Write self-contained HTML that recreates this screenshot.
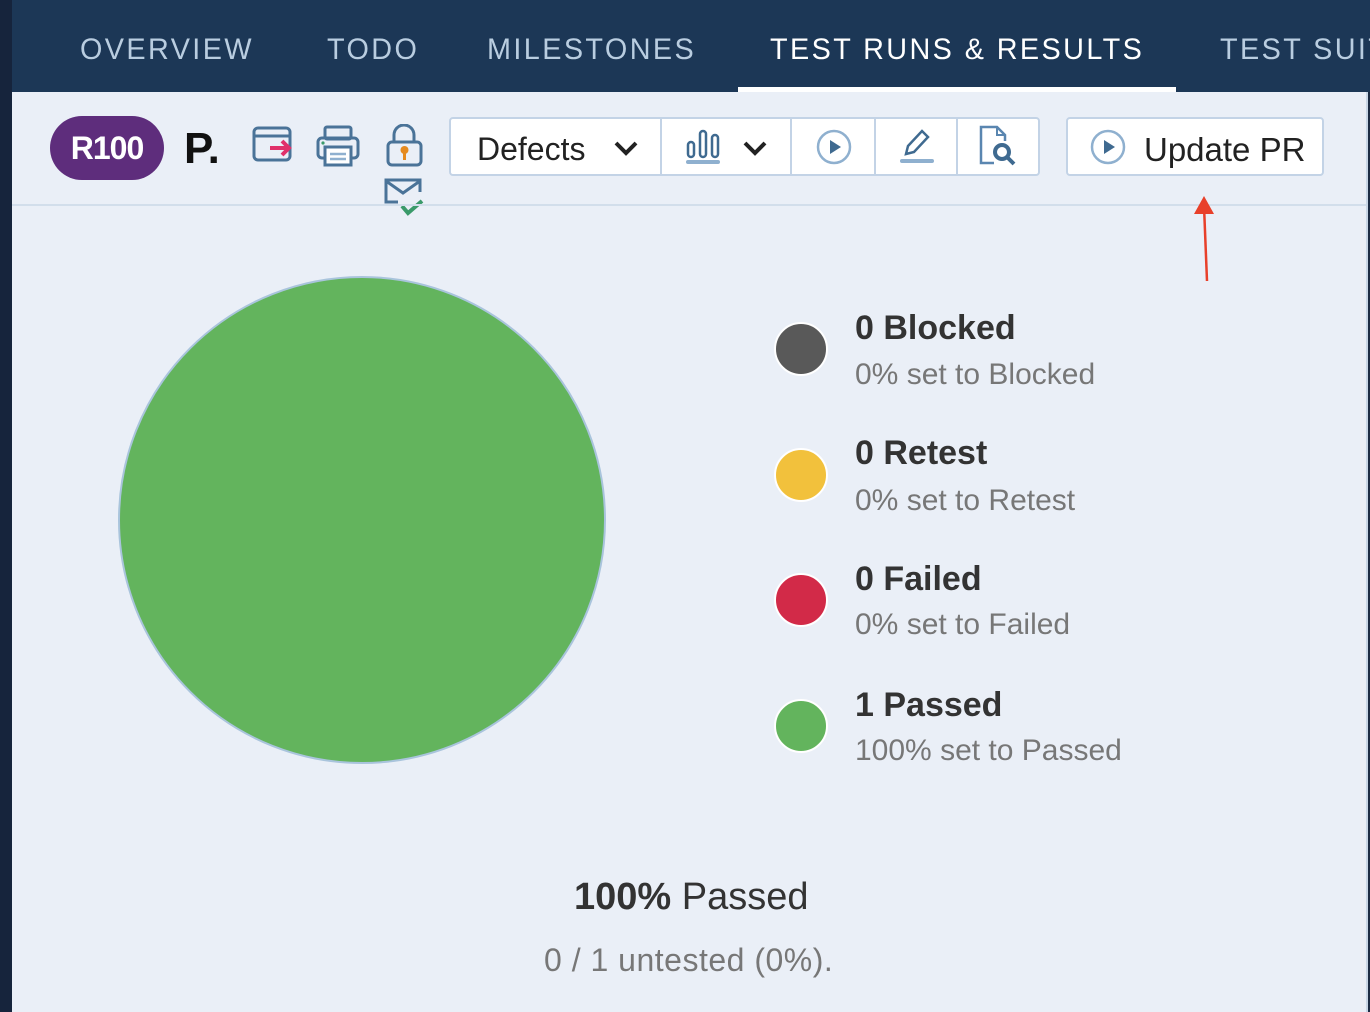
<!DOCTYPE html>
<html><head><meta charset="utf-8"><style>
*{margin:0;padding:0;box-sizing:border-box}
body{width:1370px;height:1012px;overflow:hidden;background:#eaeff7;font-family:"Liberation Sans",sans-serif;position:relative}
.a{position:absolute;white-space:nowrap}
.hdr{left:0;top:0;width:1370px;height:92px;background:#1c3756}
.tab{top:33px;font-size:30px;color:#b9cde0;letter-spacing:2.5px;transform-origin:left top;transform:scaleX(.96)}
.btn{background:#fff;border:2px solid #c3d3e6;border-radius:4px}
.sep{top:118px;width:2px;height:56px;background:#c3d3e6}
.dot{width:54px;height:54px;border-radius:50%;border:2px solid #fff}
.t1{font-size:34px;font-weight:bold;color:#333}
.t2{font-size:30px;color:#777}
</style></head><body>
<div class="a hdr"></div>
<div class="a" style="left:0;top:0;width:12px;height:1012px;background:#16243c"></div>
<div class="a" style="left:1366px;top:92px;width:2px;height:920px;background:#c8d6e6"></div>
<div class="a" style="left:1368px;top:92px;width:2px;height:920px;background:#1c2c44"></div>
<div class="a tab" style="left:80px">OVERVIEW</div>
<div class="a tab" style="left:327px">TODO</div>
<div class="a tab" style="left:487px">MILESTONES</div>
<div class="a tab" style="left:770px;color:#fff">TEST RUNS &amp; RESULTS</div>
<div class="a tab" style="left:1220px">TEST SUITES</div>
<div class="a" style="left:738px;top:87px;width:438px;height:5px;background:#fff"></div>

<div class="a" style="left:50px;top:116px;width:114px;height:64px;border-radius:32px;background:#5e2d7c;color:#fff;font-size:32px;font-weight:bold;text-align:center;line-height:64px;letter-spacing:-1px">R100</div>
<div class="a" style="left:184px;top:124px;font-size:44px;font-weight:bold;color:#111">P.</div>
<svg class="a" style="left:252px;top:126px" width="42" height="38" viewBox="0 0 42 38"><rect x="2" y="2" width="36" height="32" rx="4" fill="none" stroke="#4a7398" stroke-width="3"/><line x1="2" y1="10" x2="38" y2="10" stroke="#4a7398" stroke-width="3"/><path d="M18 22h18M30 15l7 7-7 7" fill="none" stroke="#e0306a" stroke-width="4"/></svg>
<svg class="a" style="left:316px;top:125px" width="44" height="42" viewBox="0 0 44 42"><rect x="9" y="2" width="26" height="12" rx="2" fill="none" stroke="#4a7398" stroke-width="3"/><rect x="2" y="13" width="40" height="20" rx="4" fill="none" stroke="#4a7398" stroke-width="3"/><rect x="9" y="22" width="26" height="18" fill="#fff" stroke="#4a7398" stroke-width="3"/><line x1="14" y1="29" x2="30" y2="29" stroke="#8fb0cf" stroke-width="2.5"/><line x1="14" y1="34" x2="30" y2="34" stroke="#8fb0cf" stroke-width="2.5"/><circle cx="7" cy="18" r="1.6" fill="#3a9a6a"/></svg>
<svg class="a" style="left:385px;top:124px" width="40" height="44" viewBox="0 0 40 44"><path d="M9 18v-7a10 10 0 0 1 20 0v7" fill="none" stroke="#4a7398" stroke-width="3"/><rect x="3" y="18" width="33" height="23" rx="4" fill="none" stroke="#4a7398" stroke-width="3"/><circle cx="19.5" cy="26" r="4" fill="#e58a1f"/><rect x="18" y="27" width="3" height="9" fill="#e58a1f"/></svg>
<svg class="a" style="left:384px;top:178px" width="42" height="40" viewBox="0 0 42 40"><path d="M14 24H2V2h34v12" fill="none" stroke="#4a7398" stroke-width="3"/><path d="M2 3l17 12 17-12" fill="none" stroke="#4a7398" stroke-width="3"/><path d="M18 28l6 7 14-12" fill="none" stroke="#3a9a6a" stroke-width="4"/></svg>

<div class="a btn" style="left:449px;top:117px;width:591px;height:59px"></div>
<div class="a sep" style="left:660px"></div><div class="a sep" style="left:790px"></div><div class="a sep" style="left:874px"></div><div class="a sep" style="left:956px"></div>
<div class="a" style="left:477px;top:131px;font-size:32px;color:#222">Defects</div>
<svg class="a" style="left:613px;top:140px" width="26" height="18" viewBox="0 0 26 18"><path d="M3 3l10 10 10-10" fill="none" stroke="#222" stroke-width="4"/></svg>
<svg class="a" style="left:685px;top:128px" width="38" height="38" viewBox="0 0 38 38"><rect x="3" y="14" width="6" height="15" rx="3" fill="none" stroke="#3f6a90" stroke-width="2.5"/><rect x="15" y="3" width="6" height="26" rx="3" fill="none" stroke="#3f6a90" stroke-width="2.5"/><rect x="27" y="7" width="6" height="22" rx="3" fill="none" stroke="#3f6a90" stroke-width="2.5"/><rect x="1" y="32" width="34" height="4" rx="2" fill="#8fb0cf"/></svg>
<svg class="a" style="left:742px;top:140px" width="26" height="18" viewBox="0 0 26 18"><path d="M3 3l10 10 10-10" fill="none" stroke="#222" stroke-width="4"/></svg>
<svg class="a" style="left:815px;top:128px" width="38" height="38" viewBox="0 0 38 38"><circle cx="19" cy="19" r="16" fill="none" stroke="#8fb0cf" stroke-width="2.5"/><path d="M15 12v14l11-7z" fill="#3f6a90"/></svg>
<svg class="a" style="left:898px;top:126px" width="38" height="40" viewBox="0 0 38 40"><path d="M8 28l2-8 14-15 6 6-14 15z" fill="none" stroke="#3f6a90" stroke-width="2.5"/><rect x="2" y="33" width="34" height="4" rx="2" fill="#8fb0cf"/></svg>
<svg class="a" style="left:978px;top:125px" width="42" height="42" viewBox="0 0 42 42"><path d="M16 38H3V2h16l8 8v6" fill="none" stroke="#5a86b0" stroke-width="2.5"/><path d="M19 2v8h8" fill="none" stroke="#5a86b0" stroke-width="2"/><circle cx="24" cy="27" r="7" fill="none" stroke="#3f6a90" stroke-width="4"/><path d="M29 32l7 7" stroke="#3f6a90" stroke-width="4"/></svg>

<div class="a btn" style="left:1066px;top:117px;width:258px;height:59px"></div>
<svg class="a" style="left:1088px;top:127px" width="40" height="40" viewBox="0 0 40 40"><circle cx="20" cy="20" r="16" fill="none" stroke="#8fb0cf" stroke-width="2.5"/><path d="M16 13v14l11-7z" fill="#3f6a90"/></svg>
<div class="a" style="left:1144px;top:131px;font-size:33px;color:#222">Update PR</div>

<div class="a" style="left:12px;top:204px;width:1354px;height:2px;background:#d2deeb"></div>
<svg class="a" style="left:1190px;top:192px" width="30" height="92" viewBox="0 0 30 92"><path d="M14 14l3 75" stroke="#e8402a" stroke-width="2.5"/><path d="M4 22l10-18 10 18z" fill="#e8402a"/></svg>

<svg class="a" style="left:116px;top:275px" width="492" height="492"><circle cx="246" cy="245" r="243" fill="#63b45d" stroke="#a9c4dc" stroke-width="2"/></svg>

<div class="a dot" style="left:774px;top:322px;background:#595959"></div>
<div class="a t1" style="left:855px;top:309px">0 Blocked</div>
<div class="a t2" style="left:855px;top:358px">0% set to Blocked</div>
<div class="a dot" style="left:774px;top:448px;background:#f2c13c"></div>
<div class="a t1" style="left:855px;top:434px">0 Retest</div>
<div class="a t2" style="left:855px;top:484px">0% set to Retest</div>
<div class="a dot" style="left:774px;top:573px;background:#d22a48"></div>
<div class="a t1" style="left:855px;top:560px">0 Failed</div>
<div class="a t2" style="left:855px;top:608px">0% set to Failed</div>
<div class="a dot" style="left:774px;top:699px;background:#63b45d"></div>
<div class="a t1" style="left:855px;top:686px">1 Passed</div>
<div class="a t2" style="left:855px;top:734px">100% set to Passed</div>

<div class="a" style="left:574px;top:876px;font-size:38px;color:#333"><b>100%</b> Passed</div>
<div class="a" style="left:544px;top:942px;font-size:32px;color:#777;letter-spacing:.5px">0 / 1 untested (0%).</div>
</body></html>
